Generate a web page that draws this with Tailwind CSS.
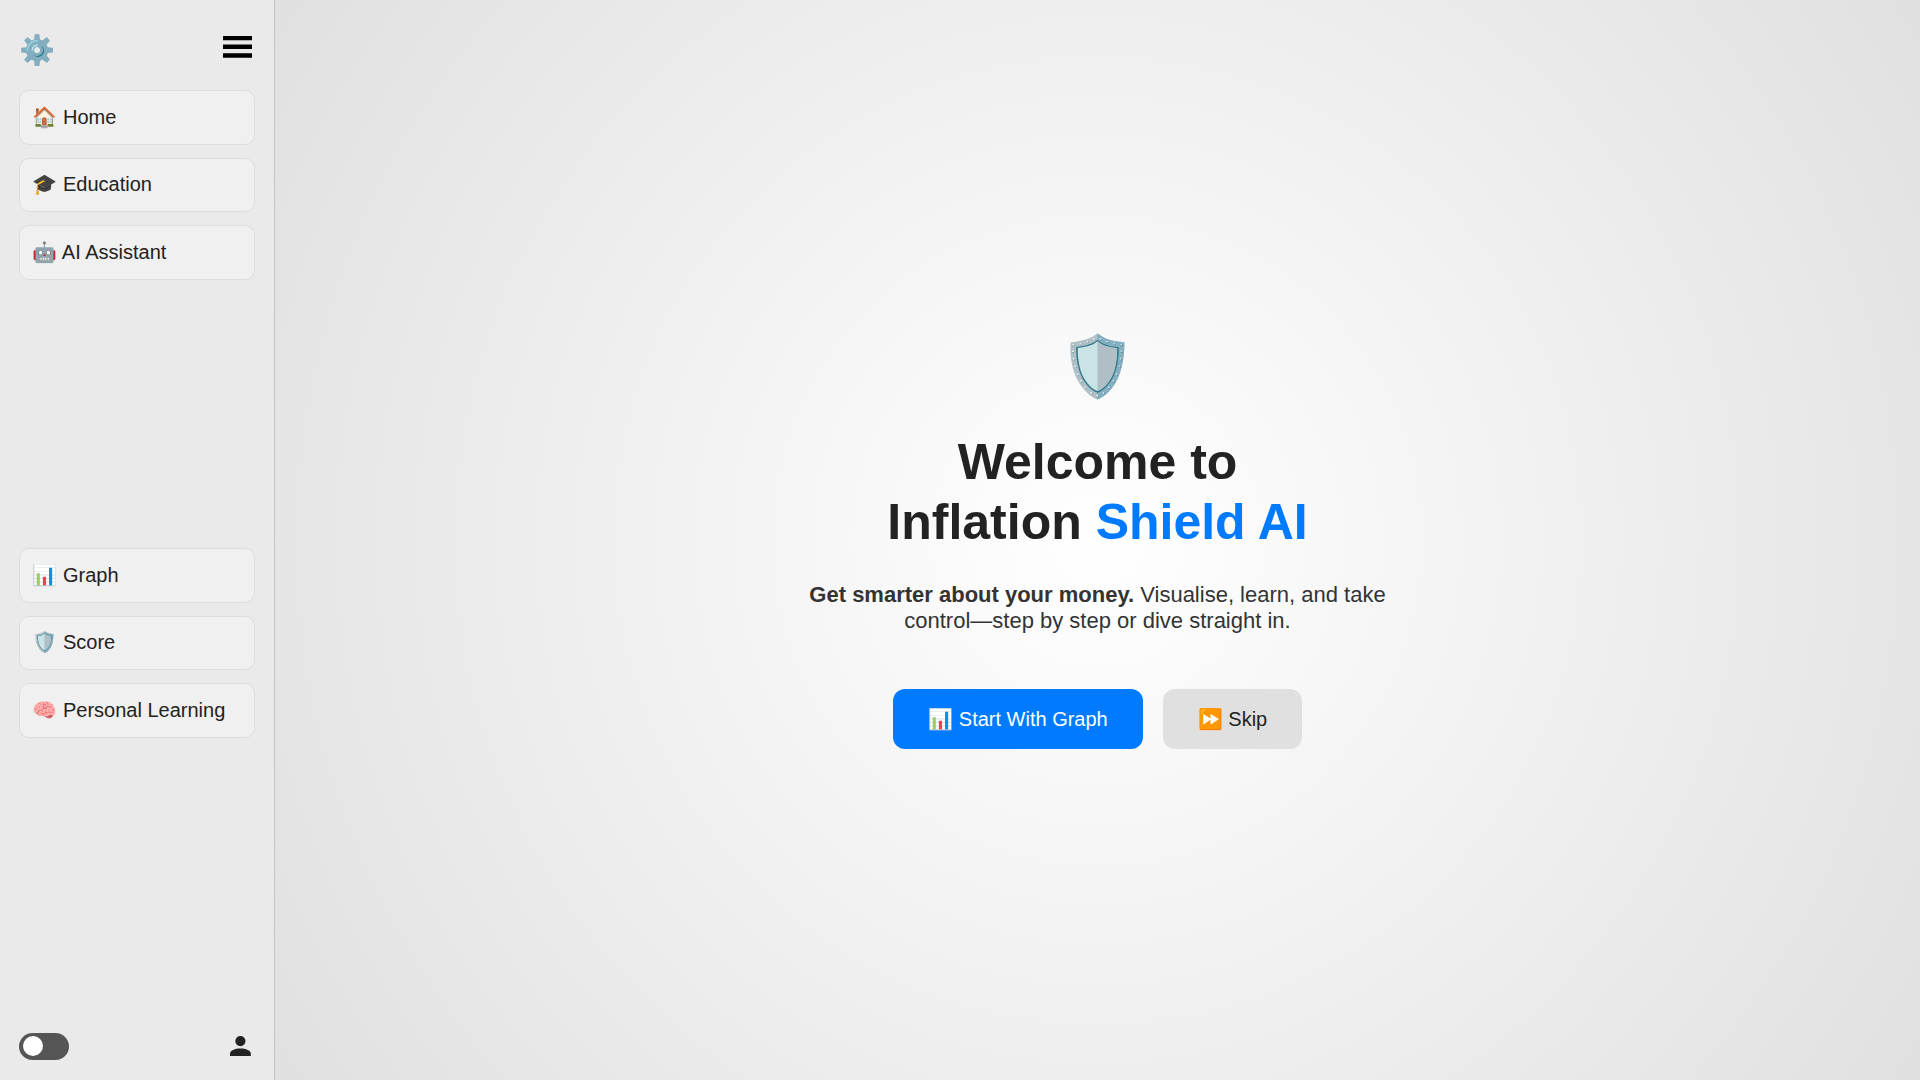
<!DOCTYPE html>
<html lang="en">
<head>
<meta charset="utf-8">
<title>Inflation Shield AI</title>
<script src="https://cdn.jsdelivr.net/npm/@tailwindcss/browser@4"></script>
</head>
<body class="flex h-screen overflow-hidden font-['Liberation_Sans',Arial,sans-serif] text-[#222]">
<aside class="flex w-[275px] shrink-0 flex-col justify-between border-r border-[#c4c4c4] bg-[#eaeaea] px-[19.3px] pt-[30px] pb-[20px]">
  <div>
    <header class="flex h-[60.4px] items-start justify-between">
      <button class="pt-px text-[29px] leading-[39px]">⚙️</button>
      <button class="mt-[6px] mr-[2.5px]" aria-label="Menu">
        <svg class="block h-[22px] w-[29px]" viewBox="0 0 29 22"><path d="M0 0h29v4.3H0zM0 8.6h29v4.3H0zM0 17.3h29v4.4H0z"/></svg>
      </button>
    </header>
    <nav class="flex flex-col gap-[13px] text-[20px] leading-[23px]">
      <a class="flex h-[54.4px] items-center rounded-[10px] border border-[#ddd] bg-[#f0f0f0] px-[12.1px]">🏠 Home</a>
      <a class="flex h-[54.4px] items-center rounded-[10px] border border-[#ddd] bg-[#f0f0f0] px-[12.1px]">🎓 Education</a>
      <a class="flex h-[54.4px] items-center rounded-[10px] border border-[#ddd] bg-[#f0f0f0] px-[12.1px]">🤖 AI Assistant</a>
    </nav>
  </div>
  <nav class="mb-[26.6px] flex flex-col gap-[13px] text-[20px] leading-[23px]">
    <a class="flex h-[54.4px] items-center rounded-[10px] border border-[#ddd] bg-[#f0f0f0] px-[12.1px]">📊 Graph</a>
    <a class="flex h-[54.4px] items-center rounded-[10px] border border-[#ddd] bg-[#f0f0f0] px-[12.1px]">🛡️ Score</a>
    <a class="flex h-[54.4px] items-center rounded-[10px] border border-[#ddd] bg-[#f0f0f0] px-[12.1px]">🧠 Personal Learning</a>
  </nav>
  <footer class="flex h-[27px] items-center justify-between">
    <button class="flex h-[27px] w-[50px] items-center rounded-full bg-[#555] pl-[3.7px]" aria-label="Dark mode"><span class="mb-px size-[20px] rounded-full bg-white"></span></button>
    <svg class="mr-[4px] mb-px h-[20px] w-[21px] fill-[#222]" viewBox="0 0 21 20"><circle cx="10.4" cy="5.1" r="5.1"/><path d="M0 20v-2.6C0 14.4 5 12.4 10.4 12.4S20.8 14.4 20.8 17.4V20z"/></svg>
  </footer>
</aside>
<main class="flex grow flex-col items-center bg-[radial-gradient(circle,#fff_0%,#e0e0e0_100%)] pt-[322px] text-center">
  <div class="text-[60px] leading-[90px]">🛡️</div>
  <h1 class="mt-[20px] text-[50px] leading-[60px] font-bold">Welcome to<br>Inflation <span class="text-[#007bff]">Shield AI</span></h1>
  <p class="mt-[30px] text-[22px] leading-[26px] text-[#333]"><strong>Get smarter about your money.</strong> Visualise, learn, and take<br>control—step by step or dive straight in.</p>
  <div class="mt-[55px] flex gap-[20px] text-[20px] leading-[23px]">
    <button class="h-[60px] w-[250px] rounded-[12px] bg-[#007bff] text-white">📊 Start With Graph</button>
    <button class="h-[60px] w-[139px] rounded-[12px] bg-[#e0e0e0]">⏩ Skip</button>
  </div>
</main>
</body>
</html>
